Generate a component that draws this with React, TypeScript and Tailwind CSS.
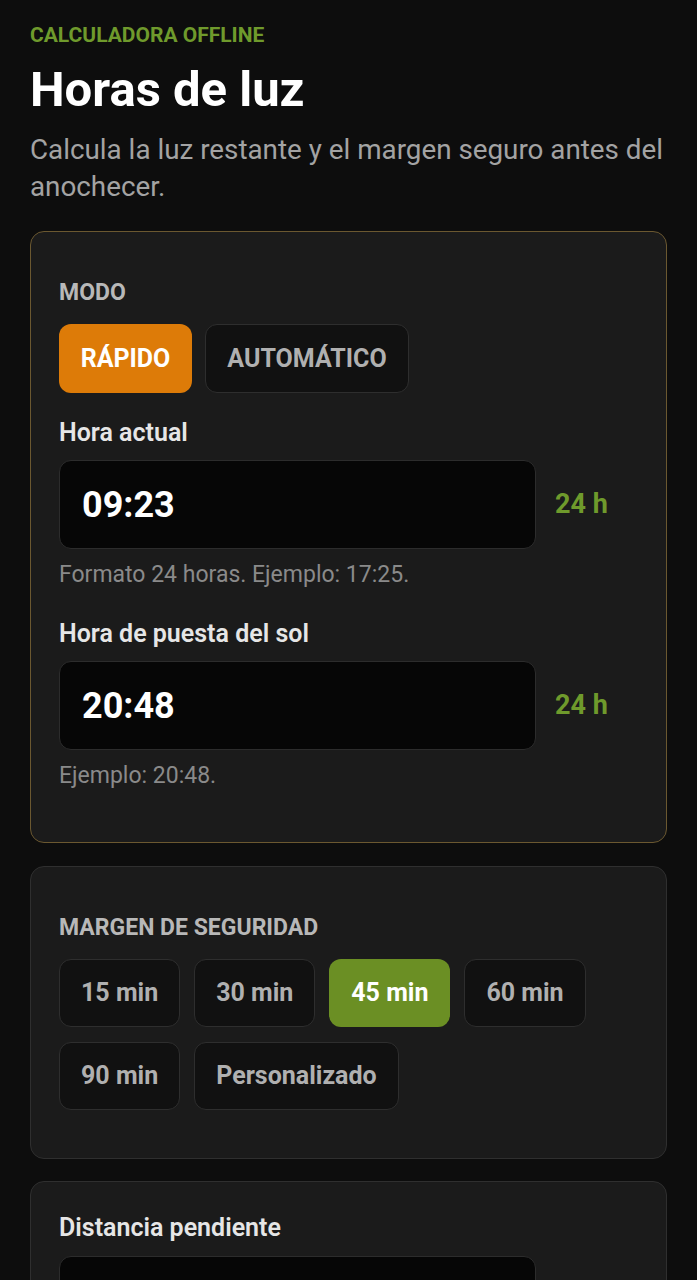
import React from "react";

const MARGINS = ["15 min", "30 min", "45 min", "60 min", "90 min", "Personalizado"];

interface TimeFieldProps {
  label: string;
  value: string;
  hint?: string;
}

const TimeField: React.FC<TimeFieldProps> = ({ label, value, hint }) => (
  <div>
    <div className="text-[25px] leading-[30px] font-semibold text-[#e6e6e6]">{label}</div>
    <div className="mt-[12px] flex items-center gap-[19px]">
      <div className="flex h-[89px] w-[477px] items-center rounded-[12px] border border-[#2c2c2c] bg-[#060606] px-[22px]">
        <span className="text-[36px] font-bold text-white">{value}</span>
      </div>
      <span className="text-[27px] font-bold text-[#6f9a2c]">24 h</span>
    </div>
    {hint && <p className="mt-[11px] text-[23px] leading-[30px] text-[#8a8a8a]">{hint}</p>}
  </div>
);

export default function App() {
  const [mode, setMode] = React.useState("rapido");
  const [margin, setMargin] = React.useState("45 min");

  return (
    <div
      className="min-h-screen bg-[#0d0d0d] px-[30px] pt-[21px] pb-10"
      style={{ fontFamily: "Roboto, 'Noto Sans', sans-serif" }}
    >
      <div className="text-[21px] leading-[28px] font-bold text-[#6f9a2c]">CALCULADORA OFFLINE</div>
      <h1 className="mt-[14px] text-[49px] leading-[54px] font-bold text-white">Horas de luz</h1>
      <p className="mt-[14px] text-[27.8px] leading-[37px] text-[#a3a3a3]">
        Calcula la luz restante y el margen seguro antes del anochecer.
      </p>

      {/* Mode + times */}
      <section className="mt-[26px] rounded-[14px] border border-[#6b5830] bg-[#1b1b1b] px-[28px] pt-[47px] pb-[51px]">
        <div className="text-[23px] leading-[28px] font-bold text-[#b8b8b8]">MODO</div>
        <div className="mt-[17px] flex gap-[13px]">
          <button
            type="button"
            onClick={() => setMode("rapido")}
            className={
              mode === "rapido"
                ? "h-[69px] w-[133px] rounded-[12px] bg-[#dd7b08] text-[25px] font-bold text-white"
                : "h-[69px] w-[133px] rounded-[12px] border border-[#2e2e2e] bg-[#111111] text-[25px] font-bold text-[#b0b0b0]"
            }
          >
            RÁPIDO
          </button>
          <button
            type="button"
            onClick={() => setMode("auto")}
            className={
              mode === "auto"
                ? "h-[69px] w-[204px] rounded-[12px] bg-[#dd7b08] text-[25px] font-bold text-white"
                : "h-[69px] w-[204px] rounded-[12px] border border-[#2e2e2e] bg-[#111111] text-[25px] font-bold text-[#b0b0b0]"
            }
          >
            AUTOMÁTICO
          </button>
        </div>

        <div className="mt-[25px]">
          <TimeField label="Hora actual" value="09:23" hint="Formato 24 horas. Ejemplo: 17:25." />
        </div>
        <div className="mt-[29px]">
          <TimeField label="Hora de puesta del sol" value="20:48" hint="Ejemplo: 20:48." />
        </div>
      </section>

      {/* Safety margin */}
      <section className="mt-[23px] rounded-[14px] border border-[#2f2f2f] bg-[#1b1b1b] px-[28px] pt-[47px] pb-[48px]">
        <div className="text-[23px] leading-[28px] font-bold text-[#b8b8b8]">MARGEN DE SEGURIDAD</div>
        <div className="mt-[17px] flex flex-wrap gap-x-[14px] gap-y-[15px]">
          {MARGINS.map((m) => (
            <button
              key={m}
              type="button"
              onClick={() => setMargin(m)}
              className={
                margin === m
                  ? "h-[68px] min-w-[121px] rounded-[12px] bg-[#6b8f24] px-[21px] text-[25px] font-bold text-white"
                  : "h-[68px] min-w-[121px] rounded-[12px] border border-[#2e2e2e] bg-[#111111] px-[21px] text-[25px] font-bold text-[#b0b0b0]"
              }
            >
              {m}
            </button>
          ))}
        </div>
      </section>

      {/* Remaining distance */}
      <section className="mt-[22px] rounded-[14px] border border-[#2f2f2f] bg-[#1b1b1b] px-[28px] pt-[31px] pb-[50px]">
        <div className="text-[25px] leading-[30px] font-semibold text-[#e6e6e6]">Distancia pendiente</div>
        <div className="mt-[13px] flex items-center gap-[19px]">
          <div className="h-[88px] w-[477px] rounded-[12px] border border-[#2c2c2c] bg-[#060606]" />
        </div>
      </section>
    </div>
  );
}
